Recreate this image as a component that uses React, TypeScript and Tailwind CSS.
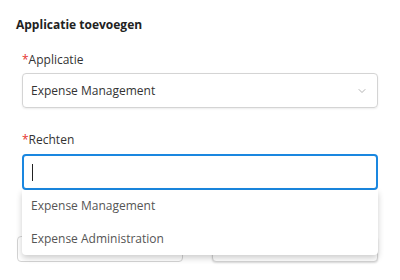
import { ChevronDown } from 'lucide-react';

export default function App() {
  return (
    <div className="h-[280px] w-[400px] bg-white pt-[15px] text-[12px] text-[#333] [font-family:'Open_Sans',sans-serif]">
      <h2 className="h-5 pl-4 font-bold leading-5 text-[#222]">Applicatie toevoegen</h2>

      <div className="mt-[15px] px-[22px]">
        <label className="block h-5 leading-5">
          <span className="text-[#e5322d]">*</span>Applicatie
        </label>
        <div className="mt-[3px] flex h-[35px] items-center justify-between rounded border border-[#d4d4d4] pl-2 pr-[9px] shadow-[0_1px_2px_rgba(0,0,0,0.08)]">
          <span className="text-[#333]">Expense Management</span>
          <ChevronDown size={12} strokeWidth={1.5} className="text-[#999]" />
        </div>

        <label className="mt-[22px] block h-5 leading-5">
          <span className="text-[#e5322d]">*</span>Rechten
        </label>
        <div className="relative mt-1">
          <div className="flex h-9 items-center rounded border-2 border-[#1a87e0] pl-2">
            <span className="h-[17px] w-px bg-[#222]" />
          </div>
          <ul className="absolute left-0 right-0 top-9 z-10 rounded-b bg-white text-[#555] shadow-[0_3px_6px_rgba(0,0,0,0.2)]">
            <li className="flex h-8 items-center pl-[9px]">Expense Management</li>
            <li className="flex h-[33px] items-center pl-[9px]">Expense Administration</li>
          </ul>
        </div>
      </div>

      <div className="mt-[46px] flex justify-between pl-[17px] pr-[22px]">
        <button className="h-[26px] w-[166px] rounded border border-[#d4d4d4] bg-white" aria-label="Annuleren" />
        <button className="h-[26px] w-[166px] rounded border border-[#d4d4d4] bg-white shadow-[0_1px_2px_rgba(0,0,0,0.15)]" aria-label="Toevoegen" />
      </div>
    </div>
  );
}
